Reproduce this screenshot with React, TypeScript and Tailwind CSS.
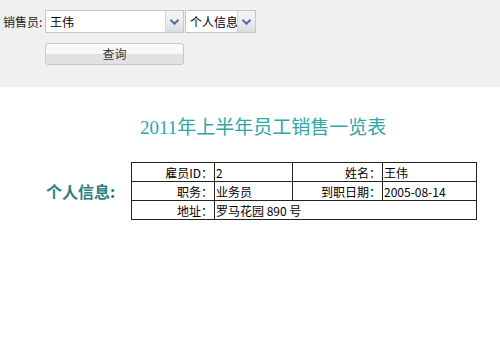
import React from "react";

const Chevron = () => (
  <svg width="9" height="6" viewBox="0 0 9 6" className="block">
    <path d="M0.5 0.8 L4.5 4.8 L8.5 0.8" fill="none" stroke="#4a6ea8" strokeWidth="2" />
  </svg>
);

function Select({ w, text, arrowW = 18 }: { w: number; text: string; arrowW?: number }) {
  return (
    <div
      className="flex h-[23px] border border-[#c4c4d4] bg-white box-border"
      style={{ width: w }}
    >
      <div className="flex-1 flex items-center pl-[4px] text-[12px] text-black overflow-hidden whitespace-nowrap">
        {text}
      </div>
      <div
        className="flex items-center justify-center border-l border-[#d4d4dc] bg-gradient-to-b from-[#f4f4f6] via-[#ececee] to-[#dcdcdc]"
        style={{ width: arrowW }}
      >
        <Chevron />
      </div>
    </div>
  );
}

export default function App() {
  const font = { fontFamily: '"Noto Sans CJK SC", "Liberation Sans", sans-serif' };
  const cell = "border border-[#222] h-[19px] p-0 text-[12px] leading-[17px] text-black";
  return (
    <div className="w-[500px] h-[350px] bg-white overflow-hidden" style={font}>
      <div className="h-[87px] bg-[#f0f0f0] pt-[10px] pl-[3px]">
        <div className="flex items-center">
          <div className="w-[42px] text-[12px] text-[#222] whitespace-nowrap">销售员:</div>
          <Select w={139} text="王伟" />
          <div className="w-[1px]" />
          <Select w={71} text="个人信息" />
        </div>
        <div className="mt-[10px] ml-[42px] w-[139px] h-[22px] rounded-[3px] border border-[#c8c8c8] bg-gradient-to-b from-[#f8f8f8] from-50% to-[#e2e2e2] to-50% flex items-center justify-center text-[12px] text-[#333]">
          查询
        </div>
      </div>

      <div
        className="mt-[29px] pl-[140px] text-[19px] leading-[24px] text-[#2ea6a6] whitespace-nowrap"
        style={{ fontFamily: '"Liberation Serif", "Noto Sans CJK SC", serif' }}
      >
        2011年上半年员工销售一览表
      </div>

      <div className="mt-[22px] flex items-center">
        <div className="w-[131px] pl-[46px] text-[16px] font-bold text-[#2e8080] whitespace-nowrap">
          个人信息:
        </div>
        <table className="border-collapse w-[345px] table-fixed">
          <colgroup>
            <col className="w-[83px]" />
            <col className="w-[78px]" />
            <col className="w-[90px]" />
            <col className="w-[94px]" />
          </colgroup>
          <tbody>
            <tr>
              <td className={`${cell} text-right pr-[1px]`}>雇员ID：</td>
              <td className={`${cell} text-left pl-[1px]`}>2</td>
              <td className={`${cell} text-right pr-[1px]`}>姓名：</td>
              <td className={`${cell} text-left pl-[1px]`}>王伟</td>
            </tr>
            <tr>
              <td className={`${cell} text-right pr-[1px]`}>职务：</td>
              <td className={`${cell} text-left pl-[1px]`}>业务员</td>
              <td className={`${cell} text-right pr-[1px]`}>到职日期：</td>
              <td className={`${cell} text-left pl-[1px]`}>2005-08-14</td>
            </tr>
            <tr>
              <td className={`${cell} text-right pr-[1px]`}>地址：</td>
              <td className={`${cell} text-left pl-[1px]`} colSpan={3}>
                罗马花园 890 号
              </td>
            </tr>
          </tbody>
        </table>
      </div>
    </div>
  );
}
